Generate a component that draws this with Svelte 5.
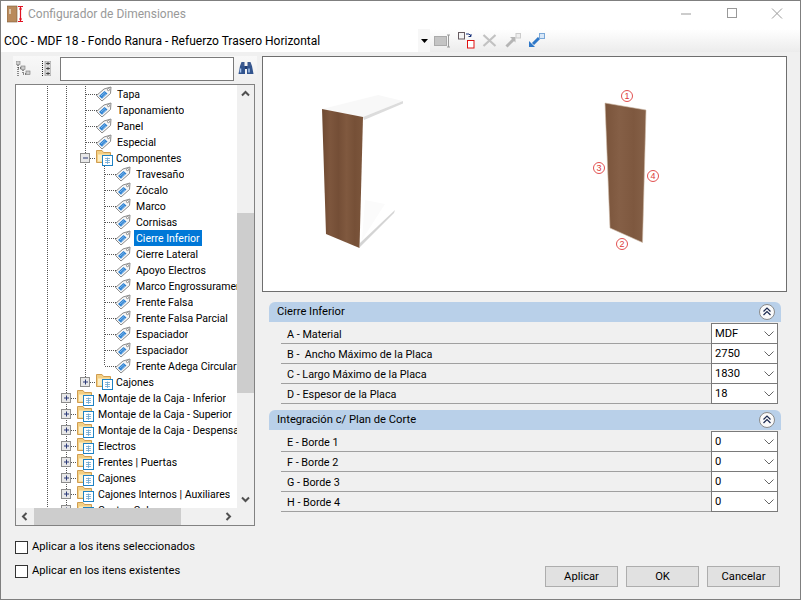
<script>
  const G3 = [47, 66, 85];
  const G4 = [47, 66, 85, 104];
  const G2 = [47, 66];
  const tag3 = (label) => ({ label, kind: 'tag', guides: G3, lineX: 85, iconX: 96, textX: 117 });
  const tag4 = (label, sel = false) => ({ label, kind: 'tag', guides: G4, lineX: 104, iconX: 115, textX: 136, sel });
  const fold2 = (label) => ({ label, kind: 'folder', guides: G2, lineX: 66, iconX: 77, textX: 98, exp: '+' });
  const rows = [
    tag3('Tapa'), tag3('Taponamiento'), tag3('Panel'), tag3('Especial'),
    { label: 'Componentes', kind: 'folder', guides: G3, lineX: 85, iconX: 96, textX: 116, exp: '-' },
    tag4('Travesaño'), tag4('Zócalo'), tag4('Marco'), tag4('Cornisas'), tag4('Cierre Inferior', true),
    tag4('Cierre Lateral'), tag4('Apoyo Electros'), tag4('Marco Engrossuramento'), tag4('Frente Falsa'),
    tag4('Frente Falsa Parcial'), tag4('Espaciador'), tag4('Espaciador'), { ...tag4('Frente Adega Circular'), last: 104 },
    { label: 'Cajones', kind: 'folder', guides: G3, lineX: 85, iconX: 96, textX: 116, exp: '+', last: 85 },
    fold2('Montaje de la Caja - Inferior'), fold2('Montaje de la Caja - Superior'), fold2('Montaje de la Caja - Despensa'),
    fold2('Electros'), fold2('Frentes | Puertas'), fold2('Cajones'), fold2('Cajones Internos | Auxiliares'), fold2('Costos Cubo')
  ];
  const groups = [
    { title: 'Cierre Inferior', items: [['A - Material', 'MDF'], ['B -  Ancho Máximo de la Placa', '2750'], ['C - Largo Máximo de la Placa', '1830'], ['D - Espesor de la Placa', '18']] },
    { title: 'Integración c/ Plan de Corte', items: [['E - Borde 1', '0'], ['F - Borde 2', '0'], ['G - Borde 3', '0'], ['H - Borde 4', '0']] }
  ];
  const marks = [['1', 627, 96], ['2', 622, 244], ['3', 599, 168], ['4', 653, 176]];
</script>

<svg class="defs" width="0" height="0" aria-hidden="true">
  <symbol id="tag" viewBox="0 0 16 16">
    <path d="M.5 9.500 8 3 15 1 14.500 7.500 6 15Z" fill="#f6f6f6" stroke="#8a8a8a" />
    <path d="M3 10 8.500 5 11.500 7.500 6 12.800Z" fill="#2e82d2" />
    <path d="M5 10 9 6.500M6.500 11.200 10 7.800" stroke="#a5cef2" stroke-width=".7" />
    <circle cx="12.500" cy="3.600" r="1.100" fill="#fff" stroke="#777" stroke-width=".8" />
  </symbol>
  <symbol id="folder" viewBox="0 0 17 16">
    <path d="M.5 12.500V.5H6L7.500 2.500H14.500V12.500Z" fill="#f3cf83" stroke="#d09d50" />
    <path d="M2 4.500H13.500V11.500H2Z" fill="#fdeec6" />
    <rect x="6.500" y="5.500" width="10" height="10" fill="#fff" stroke="#1f82c4" />
    <path d="M9 10.500H14M9 8.500H14M9 12.500H14M11.500 7.500V14" stroke="#6aa5cf" stroke-width=".8" fill="none" />
  </symbol>
</svg>

<div class="window">
  <header class="title">
    <svg class="logo" width="17" height="18" viewBox="0 0 17 18">
      <rect x="0" y="1" width="10" height="16" fill="#b98a5c" stroke="#7a5a3a" stroke-width=".6" />
      <rect x="2" y="4" width="2" height="5" fill="#dcc7ae" />
      <path d="M13.500 1.500V16.500M11 1.500H16M11 16.500H16M12 4H15M12 14H15" stroke="#e01020" stroke-width="1.200" fill="none" />
    </svg>
    <span class="title-text">Configurador de Dimensiones</span>
    <div class="winbtns">
      <svg width="12" height="12" viewBox="0 0 12 12"><path d="M1 6H11" stroke="#999" /></svg>
      <svg width="12" height="12" viewBox="0 0 12 12"><rect x="1.500" y=".5" width="9" height="9" fill="none" stroke="#999" /></svg>
      <svg width="12" height="12" viewBox="0 0 12 12"><path d="M1 .5 11 10.500M11 .5 1 10.500" stroke="#999" /></svg>
    </div>
  </header>

  <div class="toolbar">
    <div class="doc-combo">COC - MDF 18 - Fondo Ranura - Refuerzo Trasero Horizontal</div>
    <div class="doc-drop"><svg width="7" height="4" viewBox="0 0 7 4"><path d="M0 0H7L3.500 4Z" fill="#000" /></svg></div>
    <div class="tools">
      <svg width="17" height="14" viewBox="0 0 17 14"><rect x="0.500" y="2.500" width="12" height="9" fill="#c4c4c4" stroke="#aaa" /><path d="M13 1H16M14.500 1V13M13 13H16" stroke="#999" fill="none" /></svg>
      <svg width="17" height="17" viewBox="0 0 17 17"><rect x=".5" y=".5" width="6" height="6.500" fill="#f4f4f4" stroke="#665a60" /><path d="M8 2H11L13 4M13 2V4.500H10.500" stroke="#16307a" fill="none" /><rect x="9.500" y="8.500" width="6.500" height="7.500" fill="#fff" stroke="#e01010" /></svg>
      <svg width="15" height="13" viewBox="0 0 15 13"><path d="M1.500 1 13.500 12M13.500 1 1.500 12" stroke="#c2c2c2" stroke-width="2.200" /></svg>
      <svg class="tool-far" width="16" height="15" viewBox="0 0 16 15"><path d="M1.500 13.500 9 6" stroke="#b5b5b5" stroke-width="3" /><path d="M5 4H10.500V9.500Z" fill="#b5b5b5" /><rect x="11" y=".5" width="4.500" height="4.500" fill="#eee" stroke="#ccc" /></svg>
      <svg class="tool-far" width="16" height="15" viewBox="0 0 16 15"><path d="M4 11 10 5" stroke="#2f78c8" stroke-width="3" /><path d="M0 14V8L6 14Z" fill="#2f78c8" /><rect x="10.500" y=".5" width="5" height="5" fill="#d7e7f8" stroke="#7aa8d8" /></svg>
    </div>
  </div>

  <main class="body">
    <section class="left">
      <div class="tree-tools">
        <svg class="tt1" width="15" height="15" viewBox="0 0 15 15"><rect x="0" y="0" width="4" height="3.500" fill="#ccc" stroke="#777" stroke-width=".6" /><rect x="5" y="5" width="4" height="3.500" fill="#ccc" stroke="#777" stroke-width=".6" /><rect x="10" y="10" width="4" height="3.500" fill="#ccc" stroke="#777" stroke-width=".6" /><path d="M2 4V15M2 7H5M7 9V13H10" stroke="#222" stroke-dasharray="1 1" fill="none" /></svg>
        <svg class="tt2" width="9" height="15" viewBox="0 0 9 15"><rect x="3" y="0" width="6" height="15" fill="#d8d8d8" stroke="#888" stroke-width=".6" /><path d="M4 2.500H8M6 1V4M4 7.500H8M6 6V9M4 12.500H8M6 11V14" stroke="#333" stroke-width=".8" /><path d="M.5 0V15" stroke="#222" stroke-dasharray="1 1" /></svg>
        <div class="search"></div>
        <svg class="bino" width="16" height="15" viewBox="0 0 16 15"><path d="M2 5 3.500 1H6.500V5ZM14 5 12.500 1H9.500V5Z" fill="#3c5a90" /><rect x="6" y="5" width="4" height="3" fill="#213c70" /><path d="M.5 13 2 5H7V13ZM15.500 13 14 5H9V13Z" fill="#32548e" /><path d="M2.500 7.500V11.500M11 7.500V11.500" stroke="#a9c6ee" stroke-width="1.500" /></svg>
      </div>

      <div class="tree">
        <div class="viewport">
          {#each rows as r}
            <div class="row">
              <svg class="row-art" width={r.textX - 16} height="16" viewBox="16 0 {r.textX - 16} 16">
                {#each r.guides as g}
                  <path d={r.last === g ? `M${g + .5} 0V8` : `M${g + .5} 0V16`} class="dots" />
                {/each}
                <path d="M{r.lineX + 1} 8.500H{r.iconX + 1}" class="dots" />
                {#if r.exp}
                  <rect x={r.lineX - 4.5} y="3.500" width="9" height="9" fill="#e8e8e8" stroke="#8d8d8d" />
                  <path d={r.exp === '+' ? `M${r.lineX - 2} 8H${r.lineX + 3}M${r.lineX + .5} 5.500V10.500` : `M${r.lineX - 2} 8H${r.lineX + 3}`} stroke="#2c3a78" />
                {/if}
                {#if r.kind === 'tag'}
                  <use href="#tag" x={r.iconX} y="0" width="16" height="16" />
                {:else}
                  <use href="#folder" x={r.iconX} y="0" width="17" height="16" />
                {/if}
              </svg>
              <span class="label" class:sel={r.sel}>{r.label}</span>
            </div>
          {/each}
        </div>
        <div class="vbar">
          <svg width="17" height="17" viewBox="0 0 17 17"><path d="M5 10.500 8.500 7 12 10.500" class="arrow" /></svg>
          <div class="vtrack"><div class="vthumb"></div></div>
          <svg width="17" height="17" viewBox="0 0 17 17"><path d="M5 6.500 8.500 10 12 6.500" class="arrow" /></svg>
        </div>
        <div class="hbar">
          <svg width="17" height="17" viewBox="0 0 17 17"><path d="M10.500 5 7 8.500 10.500 12" class="arrow" /></svg>
          <div class="htrack"><div class="hthumb"></div></div>
          <svg width="17" height="17" viewBox="0 0 17 17"><path d="M6.500 5 10 8.500 6.500 12" class="arrow" /></svg>
        </div>
        <div class="corner"></div>
      </div>

      <div class="checks">
        <label class="check"><span class="box"></span>Aplicar a los itens seleccionados</label>
        <label class="check"><span class="box"></span>Aplicar en los itens existentes</label>
      </div>
    </section>

    <section class="right">
      <div class="preview">
        <svg width="523" height="234" viewBox="263 57 523 234">
          <defs>
            <linearGradient id="wood" x1="0" y1="0" x2="1" y2="0">
              <stop offset="0" stop-color="#6f4a32" />
              <stop offset=".2" stop-color="#7d563d" />
              <stop offset=".4" stop-color="#744e36" />
              <stop offset=".6" stop-color="#80593f" />
              <stop offset=".8" stop-color="#765037" />
              <stop offset="1" stop-color="#7c563c" />
            </linearGradient>
            <linearGradient id="wood2" x1="0" y1="0" x2="1" y2="0">
              <stop offset="0" stop-color="#7a543b" />
              <stop offset=".35" stop-color="#855f46" />
              <stop offset=".7" stop-color="#7e583f" />
              <stop offset="1" stop-color="#866148" />
            </linearGradient>
          </defs>
          <path d="M322 109 378 95 403 101 363 117Z" fill="#f8f8f8" />
          <path d="M363 117 403 101 403 103.500 364 120Z" fill="#dcdcdc" />
          <path d="M365 200 385 204 362 240Z" fill="#fbfbfb" />
          <path d="M360 243 395 210 394 213 360 247Z" fill="#d4d4d4" />
          <path d="M322 109 363 117 359.500 248 326 234Z" fill="url(#wood)" />
          <path d="M605 103 646 110 642.500 242.500 610 228Z" fill="url(#wood2)" stroke="#cdb8a6" stroke-width=".6" />
          {#each marks as [n, x, y]}
            <circle cx={x} cy={y} r="5.500" fill="#fff" stroke="#e25050" />
            <text x={x} y={y + 3} class="mark">{n}</text>
          {/each}
        </svg>
      </div>

      {#each groups as g}
        <div class="group">
          <div class="group-head">
            <span class="head-text">{g.title}</span>
            <svg class="collapse" width="18" height="18" viewBox="0 0 18 18">
              <circle cx="9" cy="9" r="7.500" fill="#fafafa" stroke="#8a8a8a" />
              <path d="M5.500 8.500 9 5 12.500 8.500M5.500 12 9 8.500 12.500 12" fill="none" stroke="#1c2a50" stroke-width="1.200" />
            </svg>
          </div>
          <div class="items">
            {#each g.items as [name, val]}
              <div class="item">
                <span class="item-name">{name}</span>
                <div class="combo">
                  <span class="combo-val">{val}</span>
                  <svg width="10" height="6" viewBox="0 0 10 6"><path d="M.5 .5 5 5 9.500 .5" fill="none" stroke="#666" /></svg>
                </div>
              </div>
            {/each}
          </div>
        </div>
      {/each}

      <div class="buttons">
        <button>Aplicar</button>
        <button>OK</button>
        <button>Cancelar</button>
      </div>
    </section>
  </main>
</div>

<style>
  :global(body) { margin: 0; background: #f0f0f0; }
  .defs { display: block; height: 0; }
  svg { display: block; flex: none; }
  .window {
    width: 801px; height: 600px; box-sizing: border-box;
    border: 1px solid #7f7f7f;
    display: flex; flex-direction: column;
    background: #f0f0f0; color: #000;
    font: 11.200px/16px Roboto, "Liberation Sans", sans-serif;
  }
  .title { height: 28px; box-sizing: border-box; padding: 0 0 3px 6px; flex: none; background: #fff; display: flex; align-items: center; }
  .logo { margin-right: 4px; }
  .title-text { color: #999; font-size: 12px; }
  .winbtns { margin-left: auto; display: flex; gap: 33.500px; padding-right: 17px; }
  .toolbar { height: 23px; flex: none; display: flex; align-items: stretch; background: linear-gradient(#fff, #ececec); font-size: 12px; }
  .doc-combo { width: 414px; padding-left: 3px; background: #fff; line-height: 24px; box-sizing: content-box; }
  .doc-drop { width: 12px; background: #f7f7f7; display: flex; align-items: center; justify-content: center; }
  .tools { display: flex; align-items: center; gap: 7px; margin-left: 4px; }
  .tools .tool-far { margin-left: 1px; }
  .body { flex: 1; min-height: 0; display: flex; gap: 5px; padding: 4px 0 0 12px; }
  .left { width: 244px; flex: none; display: flex; flex-direction: column; }
  .tree-tools {
    height: 25px; flex: none; margin-bottom: 3px; display: flex; align-items: center;
    background: linear-gradient(#f8f8f8, #f0f0f0);
  }
  .tt1 { margin-left: 3px; }
  .tt2 { margin-left: 11px; }
  .search { width: 172px; height: 22px; margin-left: 9px; background: #fff; border: 1px solid #7a7a7a; }
  .bino { margin-left: 4px; }
  .tree {
    margin-left: 2px; width: 240px; height: 442px; box-sizing: border-box;
    border: 1px solid #828282; background: #fff;
    display: grid; grid-template-columns: 221px 17px; grid-template-rows: 423px 17px;
  }
  .viewport { overflow: hidden; padding-top: 1px; box-sizing: border-box; }
  .row { height: 16px; display: flex; white-space: nowrap; }
  .dots { stroke: #555; stroke-dasharray: 1 1; fill: none; }
  .label { display: block; height: 16px; line-height: 18px; font-size: 10.500px; overflow: hidden; }
  .label.sel { background: #0078d7; color: #fff; margin-left: -2px; padding: 0 2px; }
  .vbar { background: #f0f0f0; display: flex; flex-direction: column; }
  .vtrack { flex: 1; }
  .vthumb { height: 180px; margin-top: 111px; background: #cdcdcd; }
  .hbar { background: #f0f0f0; display: flex; }
  .htrack { flex: 1; }
  .hthumb { width: 147px; margin-left: 1px; height: 100%; background: #cdcdcd; }
  .corner { background: #f0f0f0; }
  .arrow { fill: none; stroke: #505050; stroke-width: 2; }
  .checks { margin-top: 13px; display: flex; flex-direction: column; gap: 8px; margin-left: 2px; }
  .check { display: flex; align-items: center; height: 16px; gap: 4px; }
  .box { width: 13px; height: 13px; box-sizing: border-box; border: 1px solid #333; background: #fff; }
  .right { width: 525px; flex: none; display: flex; flex-direction: column; }
  .preview { height: 236px; flex: none; box-sizing: border-box; border: 1px solid #6e6e6e; background: #fff; margin-bottom: 10px; }
  .group { margin: 0 6px 6px 7px; }
  .group-head {
    height: 20px; padding: 0 5px 0 8px; display: flex; align-items: center; justify-content: space-between;
    background: #b9d0e9; border-radius: 6px 6px 0 0;
  }
  .head-text { margin-top: -1px; }
  .items { padding: 2px 3px 0 12px; }
  .item { height: 20px; box-sizing: border-box; border-bottom: 1px solid #a0a0a0; display: flex; justify-content: space-between; }
  .item-name { padding-left: 6px; line-height: 21px; white-space: pre; font-size: 10.800px; }
  .combo {
    width: 67px; height: 21px; margin-top: -1px; box-sizing: border-box; flex: none;
    background: #fff; border: 1px solid #7a7a7a; padding: 0 3px;
    display: flex; align-items: center; justify-content: space-between;
  }
  .combo-val { margin-top: 1px; }
  .buttons { margin-top: auto; padding: 0 7px 12px 0; display: flex; justify-content: flex-end; gap: 8px; }
  button {
    width: 73px; height: 21px; padding: 0; background: #e1e1e1; border: 1px solid #adadad; border-radius: 0;
    font: inherit; color: #000;
  }
  .mark { font: 9px "Liberation Sans", sans-serif; fill: #dd3a3a; text-anchor: middle; }
</style>
